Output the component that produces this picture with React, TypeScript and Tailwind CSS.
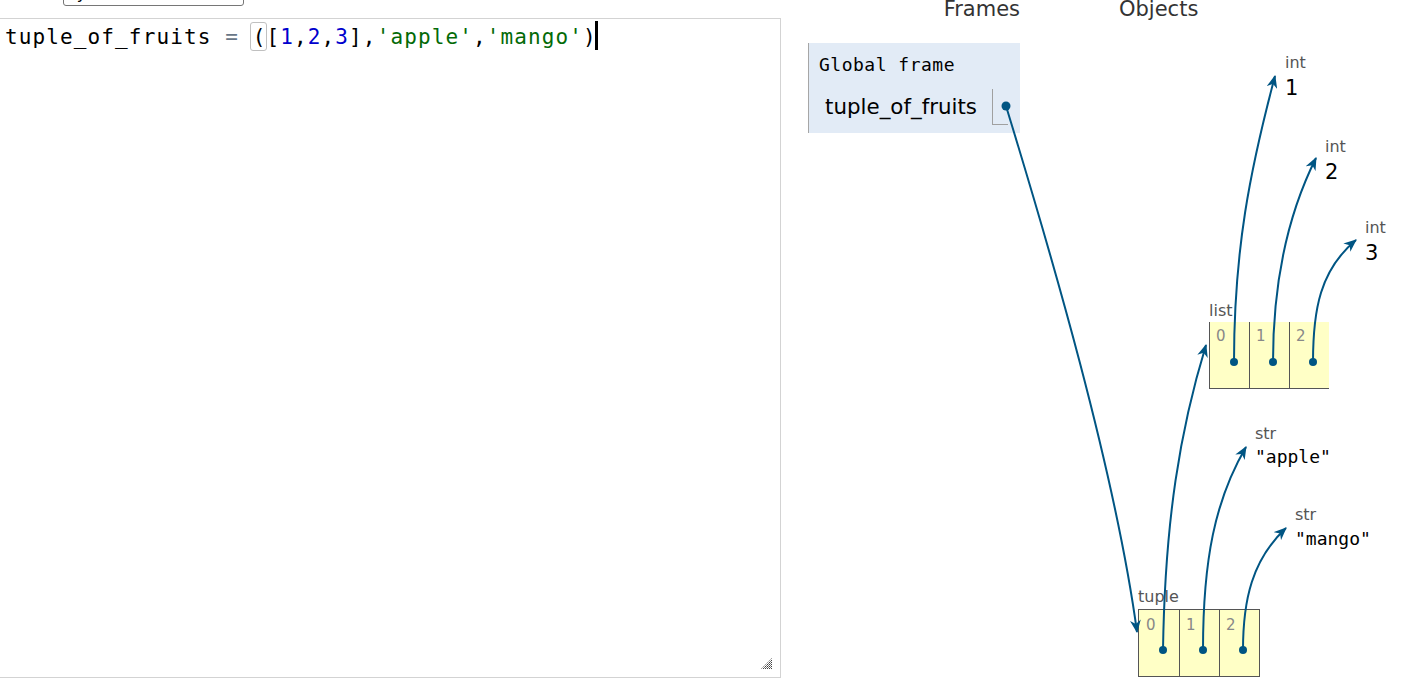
import React from "react";

export default function App() {
  return (
    <div className="relative w-[1411px] h-[693px] overflow-hidden bg-white flex">
      {/* Left column: language selector stub + code editor */}
      <div className="w-[781px] flex flex-col shrink-0">
        <div className="ml-[63px] -mt-[20px] w-[181px] h-[26px] border border-[#767676] rounded-[3px] pl-[3px] pt-[5px] font-['DejaVu_Sans',sans-serif] text-[16px] leading-[16px] text-black">
          Python 3.6
        </div>
        <div className="relative mt-[12px] w-[781px] h-[660px] border-t border-r border-b border-[#d3d3d3] pt-[2px] pl-[5px]">
          <div className="h-[30px] leading-[30px] whitespace-pre text-[21px] tracking-[1.12px] font-['DejaVu_Sans_Mono',monospace] text-black">
            tuple_of_fruits <span className="text-[#687687]">=</span>{" "}
            <span className="relative">
              (
              <span className="absolute -left-[3px] right-0 -top-[3px] -bottom-[2px] border border-[#c0c0c0] rounded-[3px]" />
            </span>
            [<span className="text-[#0000cd]">1</span>,<span className="text-[#0000cd]">2</span>,<span className="text-[#0000cd]">3</span>],<span className="text-[#036a07]">'apple'</span>,<span className="text-[#036a07]">'mango'</span>)
            <span className="inline-block -ml-[2px] w-[3px] h-[29px] bg-black align-[-6px]" />
          </div>
          {/* resize grip */}
          <svg className="absolute right-[8px] bottom-[8px] w-[11px] h-[11px]" viewBox="0 0 11 11">
            <defs>
              <pattern id="grip" width="2" height="2" patternUnits="userSpaceOnUse">
                <rect x="0" y="0" width="1" height="1" fill="#444" />
                <rect x="1" y="1" width="1" height="1" fill="#777" />
              </pattern>
            </defs>
            <polygon points="0,11 11,0 11,11" fill="url(#grip)" />
          </svg>
        </div>
      </div>

      {/* Right panel: frames & objects */}
      <div className="relative flex-1">
        <div className="flex ml-[27px] -mt-[1px] h-[20px] leading-[20px] text-[21px] font-['DejaVu_Sans',sans-serif] text-[#333]">
          <div className="w-[212px] text-right">Frames</div>
          <div className="ml-[99px]">Objects</div>
        </div>

        <div className="ml-[27px] mt-[24px] w-[212px] h-[90px] bg-[#e2ebf6] border-l border-[#a6a6a6] pl-[10px] pt-[11px]">
          <div className="font-['DejaVu_Sans_Mono',monospace] text-[18px] leading-[22px] tracking-[0.5px] text-black">
            Global frame
          </div>
          <div className="flex justify-end items-start mt-[13px] pr-[12px]">
            <div className="font-['DejaVu_Sans',sans-serif] text-[21.4px] leading-[36px] pr-[15px] text-black">
              tuple_of_fruits
            </div>
            <div className="w-[16px] h-[36px] border-l border-b border-[#a0a0a0]" />
          </div>
        </div>

        {/* int 1 */}
        <div className="absolute left-[504px] top-[55px] flex flex-col font-['DejaVu_Sans',sans-serif]">
          <div className="text-[16px] leading-[16px] text-[#555]">int</div>
          <div className="mt-[5px] text-[21px] leading-[24px] text-black">1</div>
        </div>
        {/* int 2 */}
        <div className="absolute left-[544px] top-[139px] flex flex-col font-['DejaVu_Sans',sans-serif]">
          <div className="text-[16px] leading-[16px] text-[#555]">int</div>
          <div className="mt-[5px] text-[21px] leading-[24px] text-black">2</div>
        </div>
        {/* int 3 */}
        <div className="absolute left-[584px] top-[220px] flex flex-col font-['DejaVu_Sans',sans-serif]">
          <div className="text-[16px] leading-[16px] text-[#555]">int</div>
          <div className="mt-[5px] text-[21px] leading-[24px] text-black">3</div>
        </div>

        {/* list */}
        <div className="absolute left-[428px] top-[303px] flex flex-col font-['DejaVu_Sans',sans-serif]">
          <div className="text-[16px] leading-[16px] text-[#555]">list</div>
          <div className="mt-[3px] flex">
            <div className="w-[40px] h-[67px] bg-[#ffffc6] border-l border-b border-[#555] pl-[6px] pt-[7px] text-[15px] leading-[15px] text-[#888]">0</div>
            <div className="w-[40px] h-[67px] bg-[#ffffc6] border-l border-b border-[#555] pl-[6px] pt-[7px] text-[15px] leading-[15px] text-[#888]">1</div>
            <div className="w-[40px] h-[67px] bg-[#ffffc6] border-l border-b border-[#555] pl-[6px] pt-[7px] text-[15px] leading-[15px] text-[#888]">2</div>
          </div>
        </div>

        {/* str apple */}
        <div className="absolute left-[474px] top-[426px] flex flex-col">
          <div className="font-['DejaVu_Sans',sans-serif] text-[16px] leading-[16px] text-[#555]">str</div>
          <div className="mt-[4px] font-['DejaVu_Sans_Mono',monospace] text-[18px] leading-[22px] text-black">"apple"</div>
        </div>
        {/* str mango */}
        <div className="absolute left-[514px] top-[507px] flex flex-col">
          <div className="font-['DejaVu_Sans',sans-serif] text-[16px] leading-[16px] text-[#555]">str</div>
          <div className="mt-[5px] font-['DejaVu_Sans_Mono',monospace] text-[18px] leading-[22px] text-black">"mango"</div>
        </div>

        {/* tuple */}
        <div className="absolute left-[357px] top-[589px] flex flex-col font-['DejaVu_Sans',sans-serif]">
          <div className="text-[16px] leading-[16px] text-[#555]">tuple</div>
          <div className="mt-[4px] flex border border-[#555] bg-[#ffffc6]">
            <div className="w-[40px] h-[66px] pl-[7px] pt-[8px] text-[15px] leading-[15px] text-[#888]">0</div>
            <div className="w-[40px] h-[66px] border-l border-[#555] pl-[6px] pt-[8px] text-[15px] leading-[15px] text-[#888]">1</div>
            <div className="w-[40px] h-[66px] border-l border-[#555] pl-[6px] pt-[8px] text-[15px] leading-[15px] text-[#888]">2</div>
          </div>
        </div>
      </div>

      {/* Pointer arrows */}
      <svg className="absolute left-0 top-0 w-[1411px] h-[693px] pointer-events-none" viewBox="0 0 1411 693">
        <defs>
          <marker id="ah" viewBox="0 0 12 10" refX="11" refY="5" markerWidth="13" markerHeight="11" markerUnits="userSpaceOnUse" orient="auto">
            <path d="M0,0 L12,5 L0,10 L3.5,5 Z" fill="#005583" />
          </marker>
        </defs>
        <g fill="none" stroke="#005583" strokeWidth="2" markerEnd="url(#ah)">
          <path d="M1006,106 C1050,250 1115,470 1137,632" />
          <path d="M1234,362 C1234,250 1250,170 1275,76" />
          <path d="M1273,362 C1273,290 1285,220 1316,158" />
          <path d="M1313,362 C1313,310 1320,270 1356,240" />
          <path d="M1163,650 C1165,520 1180,430 1206,345" />
          <path d="M1203,650 C1203,560 1215,500 1246,447" />
          <path d="M1243,650 C1243,600 1252,560 1286,528" />
        </g>
        <g fill="#005583">
          <circle cx="1006" cy="106" r="4.5" />
          <circle cx="1234" cy="362" r="4" />
          <circle cx="1273" cy="362" r="4" />
          <circle cx="1313" cy="362" r="4" />
          <circle cx="1163" cy="650" r="4" />
          <circle cx="1203" cy="650" r="4" />
          <circle cx="1243" cy="650" r="4" />
        </g>
      </svg>
    </div>
  );
}
